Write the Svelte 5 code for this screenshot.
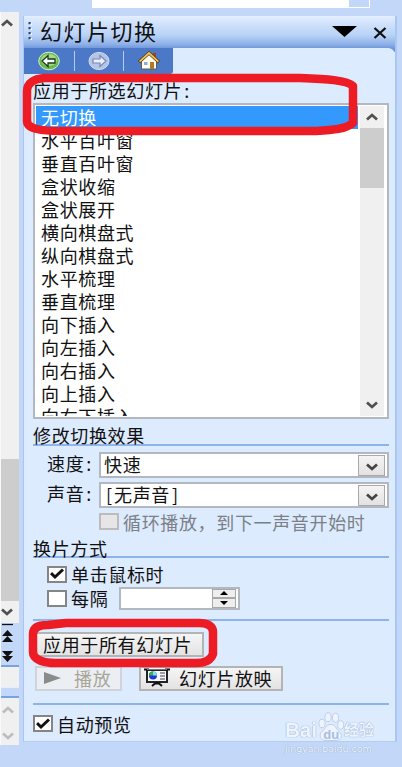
<script lang="ts">
	const transitions = [
		'无切换', '水平百叶窗', '垂直百叶窗', '盒状收缩', '盒状展开',
		'横向棋盘式', '纵向棋盘式', '水平梳理', '垂直梳理', '向下插入',
		'向左插入', '向右插入', '向上插入', '向右下插入'
	];

	let selected = $state('无切换');
	let onClick = $state(true);
	let onTimer = $state(false);
	let autoPreview = $state(true);
</script>

{#snippet chevron(up: boolean, faded = false)}
	<svg class="chevron" class:up class:faded width="12" height="8" viewBox="0 0 12 8">
		<path d="M1 1.5 L6 6 L11 1.5" fill="none" stroke="currentColor" stroke-width="2.7" />
	</svg>
{/snippet}

{#snippet tick()}
	<svg width="14" height="12" viewBox="0 0 14 12">
		<path d="M1 5.2 L5 9 L13 1.5" fill="none" stroke="#111" stroke-width="3" />
	</svg>
{/snippet}

<div class="window">
	<div class="doc-top">
		<span class="doc-tab"></span>
	</div>

	<div class="body">
		<!-- Document scrollbar -->
		<aside class="doc-scroll">
			<div class="track">
				<div class="end">{@render chevron(true)}</div>
				<div class="doc-thumb"></div>
				<div class="end">{@render chevron(false)}</div>
			</div>
			<svg class="pagers" width="19" height="42" viewBox="0 0 19 42">
				<path d="M2 1.5 H13" stroke="#111" stroke-width="1.3" />
				<path d="M7.5 7 L13 13 H2 Z M7.5 13 L13 19 H2 Z M2 28 H13 L7.5 34 Z M2 33 H13 L7.5 39 Z" fill="#111" />
			</svg>
			<div class="strip"></div>
			<div class="notes">
				{@render chevron(true, true)}
				{@render chevron(false, true)}
			</div>
		</aside>

		<main class="pane">
			<header>
				<svg width="4" height="20" viewBox="0 0 4 20">
					<path d="M2.8 1 V20" stroke="#fff" stroke-width="2" stroke-dasharray="2 3" />
					<path d="M1.6 0 V20" stroke="#284a85" stroke-width="2.2" stroke-dasharray="2.3 2.7" />
				</svg>
				<h1>幻灯片切换</h1>
				<svg class="menu" width="25" height="12" viewBox="0 0 25 12"><path d="M0 0 H25 L12.5 11 Z" /></svg>
				<svg class="close" width="14" height="12" viewBox="0 0 14 12"><path d="M1.5 1 L12.5 11 M12.5 1 L1.5 11" stroke="#111" stroke-width="2.3" /></svg>
			</header>

			<div class="toolbar-row">
				<nav>
					<button aria-label="后退">
						<svg width="22" height="20" viewBox="0 0 22 20">
							<ellipse cx="11" cy="10" rx="10.3" ry="8.8" fill="#68b951" stroke="#d4f0c8" />
							<ellipse cx="11" cy="9" rx="8" ry="6" fill="#a5da8a" />
							<path d="M4 10 L10 4.5 V8 H17 V12 H10 V15.5 Z" fill="#fff" stroke="#173b17" stroke-width="1.3" />
						</svg>
					</button>
					<button aria-label="前进">
						<svg width="22" height="20" viewBox="0 0 22 20">
							<ellipse cx="11" cy="10" rx="10" ry="8.6" fill="#b5c4e5" stroke="#d0daf0" />
							<path d="M18 10 L12 4.5 V8 H5 V12 H12 V15.5 Z" fill="#e9effb" stroke="#7489b6" stroke-width="1.2" />
						</svg>
					</button>
					<button aria-label="主页">
						<svg width="22" height="20" viewBox="0 0 22 20">
							<path d="M15 2 H18 V8 H15 Z" fill="#b33924" />
							<path d="M3.5 10 L11 3 L18.5 10 V18 H3.5 Z" fill="#fffdf0" stroke="#685a48" />
							<path d="M1 11 L11 2 L21 11" fill="none" stroke="#5c3c12" stroke-width="3.3" />
							<path d="M1.6 10.6 L11 2 L20.4 10.6" fill="none" stroke="#efc45c" stroke-width="1.8" />
							<path d="M12 11 H16 V18 H12 Z" fill="#b67922" />
							<path d="M6 11 H9.5 V14 H6 Z" fill="#8cacd8" />
						</svg>
					</button>
				</nav>
			</div>

			<div class="content">
				<div class="list-label">应用于所选幻灯片<i>:</i></div>
				<div class="listbox">
					<ul>
						{#each transitions as name}
							<li class:selected={name === selected}>
								<button onclick={() => (selected = name)}>{name}</button>
							</li>
						{/each}
					</ul>
					<div class="list-scroll">
						<div class="end">{@render chevron(true)}</div>
						<div class="thumb"></div>
						<div class="end">{@render chevron(false)}</div>
					</div>
				</div>

				<h2 class="effects">修改切换效果</h2>
				<div class="field">
					<span>速度<i>:</i></span>
					<div class="combo">快速<b>{@render chevron(false)}</b></div>
				</div>
				<div class="field">
					<span>声音<i>:</i></span>
					<div class="combo"><em>[</em>无声音<em>]</em><b>{@render chevron(false)}</b></div>
				</div>
				<div class="check loop"><span class="box"></span>循环播放，到下一声音开始时</div>

				<h2 class="advance">换片方式</h2>
				<div class="check inset">
					<button class="box" aria-label="单击鼠标时" onclick={() => (onClick = !onClick)}>{#if onClick}{@render tick()}{/if}</button>
					单击鼠标时
				</div>
				<div class="check inset">
					<button class="box" aria-label="每隔" onclick={() => (onTimer = !onTimer)}>{#if onTimer}{@render tick()}{/if}</button>
					每隔
					<div class="spinner">
						<div class="arrows">
							<span><svg width="8" height="4" viewBox="0 0 8 4"><path d="M4 0 L8 4 H0 Z" /></svg></span>
							<span><svg width="8" height="4" viewBox="0 0 8 4"><path d="M0 0 H8 L4 4 Z" /></svg></span>
						</div>
					</div>
				</div>

				<div class="actions">
					<button class="btn apply">应用于所有幻灯片</button>
					<div class="pair">
						<button class="btn play" disabled>
							<svg width="17" height="12" viewBox="0 0 17 12"><path d="M0 0 L17 6 L0 12 Z" fill="#8b8b8b" /></svg>
							播放
						</button>
						<button class="btn show">
							<svg width="26" height="19" viewBox="0 0 26 19">
								<path d="M3 2 H23 V14 H3 Z" fill="#f6f7ff" stroke="#222" stroke-width="2" />
								<path d="M0 1.5 H5 M21 1.5 H26" stroke="#111" stroke-width="2" />
								<path d="M3 1.5 H23" stroke="#777" />
								<path d="M13 14 V16 M8 18 L11 15.5 H15 L18 18" fill="none" stroke="#111" stroke-width="2" />
								<circle cx="9" cy="7.5" r="4" fill="#2436d0" />
								<path d="M9 7.5 V3.5 A4 4 0 0 0 5 7.5 Z" fill="#35b04a" />
								<path d="M9 7.5 H13 A4 4 0 0 0 9 3.5 Z" fill="#7fe0f0" />
								<path d="M16 5 H21 M16 8 H21 M16 11 H21" stroke="#444" />
							</svg>
							幻灯片放映
						</button>
					</div>
				</div>

				<div class="check preview">
					<button class="box" aria-label="自动预览" onclick={() => (autoPreview = !autoPreview)}>{#if autoPreview}{@render tick()}{/if}</button>
					自动预览
				</div>
			</div>
		</main>
	</div>

	<!-- Hand-drawn highlights -->
	<svg class="marks" width="402" height="767" viewBox="0 0 402 767">
		<path d="M44 78 H300 C326 79 347 80 353 86 V123 C346 129 333 130 316 131 H60 C42 131 27 129 27 121 V91 C27 83 34 79 44 78 Z" />
		<path d="M48 625 L66 623 H199 C208 623 213 626 213 632 V654 C211 660 205 663 196 663 H56 C44 663 33 660 33 652 V634 C33 627 39 625 48 625 Z" />
	</svg>

	<div class="watermark">
		<div class="brand">
			<span>Bai</span>
			<svg width="26" height="29" viewBox="0 0 26 29">
				<ellipse cx="4" cy="11" rx="3.1" ry="4.2" />
				<ellipse cx="10" cy="4.7" rx="3.1" ry="4.4" />
				<ellipse cx="17.5" cy="5.2" rx="3.1" ry="4.4" />
				<ellipse cx="22.7" cy="12.5" rx="3" ry="4.2" />
				<path d="M13 12 C8 12 7 17 4 19 C0 23 3 28 8 28 H18 C24 28 25 22 21 19 C18 17 18 12 13 12 Z" />
				<text x="5.3" y="26">du</text>
			</svg>
			<span class="cn">经验</span>
		</div>
		<div class="url">jingyan.baidu.com</div>
	</div>
</div>

<style>
	:global(body) {
		margin: 0;
	}

	.window {
		position: relative;
		width: 402px;
		height: 767px;
		overflow: hidden;
		background: #c3d8f8;
		font-family: 'Noto Sans CJK SC', sans-serif;
		font-size: 18px;
		letter-spacing: 0.65px;
		color: #111;
		white-space: nowrap;
	}

	.window * {
		box-sizing: border-box;
	}

	svg {
		display: block;
		flex: none;
	}

	button {
		padding: 0;
		border: 0;
		background: none;
		font: inherit;
		letter-spacing: inherit;
		color: inherit;
	}

	i,
	em {
		display: inline-block;
		font-style: normal;
		letter-spacing: 0;
	}

	i {
		padding-left: 2px;
	}

	em {
		width: 10px;
		text-align: center;
	}

	.doc-top {
		width: 278px;
		height: 8px;
		margin-left: 92px;
		background: #fff;
	}

	.doc-tab {
		display: block;
		width: 20px;
		height: 7px;
		margin-left: 257px;
		background: #c3d8f8;
	}

	.body {
		display: flex;
		align-items: flex-start;
		height: 759px;
	}

	/* Document scrollbar */
	.doc-scroll {
		width: 19px;
		margin-top: 4px;
		border-left: 1px solid #f6f9ff;
		flex: none;
	}

	.track {
		display: flex;
		flex-direction: column;
		height: 611px;
		background: #f0f0f0;
	}

	.end {
		display: flex;
		align-items: center;
		justify-content: center;
		height: 22px;
		color: #505050;
	}

	.track .end {
		padding-right: 6px;
	}

	.doc-thumb {
		height: 142px;
		margin-top: auto;
		background: #cdcdcd;
	}

	.chevron.up {
		transform: scaleY(-1);
	}

	.chevron.faded {
		color: #bdbdbd;
	}

	.pagers {
		margin-left: -1px;
	}

	.strip {
		height: 23px;
		border-top: 2px solid #7ba2e0;
		border-bottom: 1px solid #e4edfc;
		background: #f0f0f0;
	}

	.notes {
		display: flex;
		flex-direction: column;
		justify-content: space-between;
		height: 49px;
		margin-top: 8px;
		padding: 8px 0 5px 1px;
		border-top: 2px solid #7ba2e0;
		background: #f0f0f0;
	}

	/* Task pane */
	.pane {
		width: 374px;
		height: 726px;
		margin: 8px 0 0 4px;
		border-left: 1px solid #a9c6f3;
		border-right: 2px solid #a7c8f6;
		border-bottom: 1px solid #b2cdf6;
		background: #ddebff;
	}

	header {
		display: flex;
		align-items: center;
		height: 32px;
		padding: 0 8px 0 4px;
		background: linear-gradient(#e4eeff 0%, #d0e2fc 25%, #b9d2f6 60%, #8eb1e8 88%, #7199da 100%);
	}

	h1 {
		margin: 0 auto 0 8px;
		font-size: 22px;
		font-weight: 400;
		letter-spacing: 1.5px;
		line-height: 28px;
		height: 32px;
	}

	.close {
		margin: 1px 0 0 16px;
	}

	.toolbar-row {
		height: 26px;
		background: linear-gradient(#7199da, #7199da) right top / 6px 4px no-repeat;
	}

	.toolbar-row::after {
		content: '';
		display: block;
		height: 26px;
		margin-top: -26px;
		margin-left: 149px;
		border-top-right-radius: 7px;
		background: #ddebff;
	}

	nav {
		display: flex;
		width: 149px;
		height: 26px;
		background: #4b79c7;
		border-bottom-right-radius: 3px;
	}

	nav button {
		display: flex;
		align-items: center;
		justify-content: center;
		width: 50px;
	}

	nav button + button {
		border-left: 1px solid #b4cdf4;
		height: 20px;
		margin-top: 3px;
	}

	.content {
		padding: 0 6px 0 9px;
	}

	.list-label {
		height: 29px;
		line-height: 33px;
	}

	.listbox {
		display: flex;
		justify-content: space-between;
		height: 316px;
		padding: 1px 3px 1px 1px;
		border: 2px solid #b3b7c0;
		background: #fff;
	}

	ul {
		width: 322px;
		height: 310px;
		margin: 0;
		padding: 0;
		overflow: hidden;
		list-style: none;
	}

	li {
		height: 23px;
		padding-left: 5px;
	}

	li button {
		display: block;
		width: 100%;
		height: 23px;
		line-height: 21px;
		text-align: left;
	}

	li.selected {
		background: #3399ff;
		color: #fff;
	}

	.list-scroll {
		display: flex;
		flex-direction: column;
		width: 24px;
		background: #f0f0f0;
	}

	.thumb {
		height: 60px;
		margin-bottom: auto;
		background: #cdcdcd;
	}

	h2 {
		margin: 0;
		border-bottom: 2px solid #8fb4ec;
		font-size: 18px;
		font-weight: 400;
	}

	.effects {
		height: 27px;
		margin-bottom: 6px;
		line-height: 32px;
	}

	.field {
		display: flex;
		align-items: center;
		height: 26px;
		margin-bottom: 4px;
		padding-left: 14px;
		line-height: 22px;
	}

	.field > span {
		width: 52px;
		height: 26px;
	}

	.combo {
		display: flex;
		align-items: center;
		flex: 1;
		height: 26px;
		padding: 0 2px 2px 3px;
		border: 2px solid #b3b7c0;
		background: #fff;
		line-height: 20px;
	}

	.combo b {
		display: flex;
		align-items: center;
		justify-content: center;
		width: 27px;
		height: 21px;
		margin: 2px 0 0 auto;
		padding-top: 3px;
		border: 1px solid #a9a9a9;
		background: linear-gradient(#f4f4f4, #e2e2e2);
		color: #444;
	}

	.check {
		display: flex;
		align-items: center;
		height: 24px;
		line-height: 24px;
	}

	.box {
		display: flex;
		align-items: center;
		justify-content: center;
		width: 20px;
		height: 17px;
		margin-right: 4px;
		border: 2px solid #858585;
		background: #fff;
	}

	.inset {
		padding-left: 14px;
		margin-top: -1px;
		margin-bottom: 1px;
	}

	.loop {
		height: 19px;
		margin-bottom: 2px;
		padding-left: 66px;
		color: #7b7f86;
	}

	.loop .box {
		border-color: #bcbcbc;
		background: #e6e6e6;
	}

	.advance {
		height: 25px;
		margin-bottom: 5px;
		line-height: 30px;
	}

	.spinner {
		display: flex;
		justify-content: flex-end;
		width: 121px;
		height: 23px;
		margin-left: 11px;
		padding: 1px 2px;
		border: 2px solid #b3b7c0;
		background: #fff;
	}

	.arrows {
		display: flex;
		flex-direction: column;
		width: 24px;
		margin: -1px 0;
	}

	.arrows span {
		display: flex;
		flex: 1;
		align-items: center;
		justify-content: center;
		border: 1px solid #a9a9a9;
		background: #eee;
	}

	.actions {
		height: 86px;
		margin-top: 9px;
		padding-top: 11px;
		border-top: 2px solid #8fb4ec;
		border-bottom: 2px solid #8fb4ec;
	}

	.btn {
		display: flex;
		align-items: center;
		height: 25px;
		padding-bottom: 2px;
		border: 2px solid #b4b4b4;
		background: linear-gradient(#f5f5f5, #e3e3e3);
		line-height: 20px;
	}

	.apply {
		width: 170px;
		margin-left: 1px;
		padding-left: 7px;
	}

	.pair {
		display: flex;
		gap: 17px;
		margin: 9px 0 0 2px;
	}

	.play {
		width: 87px;
		padding-left: 7px;
		gap: 13px;
		border-color: #d0d4da;
		background: #ebeff4;
		color: #a9a698;
	}

	.show {
		width: 144px;
		padding-left: 3px;
		gap: 9px;
	}

	.preview {
		height: 36px;
		padding-top: 1px;
	}

	.marks {
		position: absolute;
		left: 0;
		top: 0;
		pointer-events: none;
	}

	.marks path {
		fill: none;
		stroke: #ed1c24;
		stroke-width: 8.5;
		stroke-linejoin: round;
	}

	/* Site watermark */
	.watermark {
		position: absolute;
		left: 285px;
		top: 712px;
		color: #edf4ff;
		font-family: 'Liberation Sans', 'Noto Sans CJK SC', sans-serif;
		letter-spacing: 0;
		text-shadow: 0 0 1px #8ba4c8, 0 0 1px #a3b7d5;
	}

	.brand {
		display: flex;
		align-items: flex-end;
		height: 30px;
		font-size: 20.5px;
		font-weight: 700;
		line-height: 24px;
	}

	.brand svg {
		margin: -10px 0 0 1px;
		fill: #edf4ff;
		stroke: #b0c2de;
		stroke-width: 0.7;
		height: 30px;
	}

	.brand text {
		font-size: 13px;
		font-weight: 700;
		fill: #a9bfdf;
		stroke: none;
		text-shadow: none;
	}

	.cn {
		font-size: 15px;
		line-height: 25px;
	}

	.url {
		font-family: 'DejaVu Sans', sans-serif;
		font-size: 9.4px;
		line-height: 13px;
	}
</style>
